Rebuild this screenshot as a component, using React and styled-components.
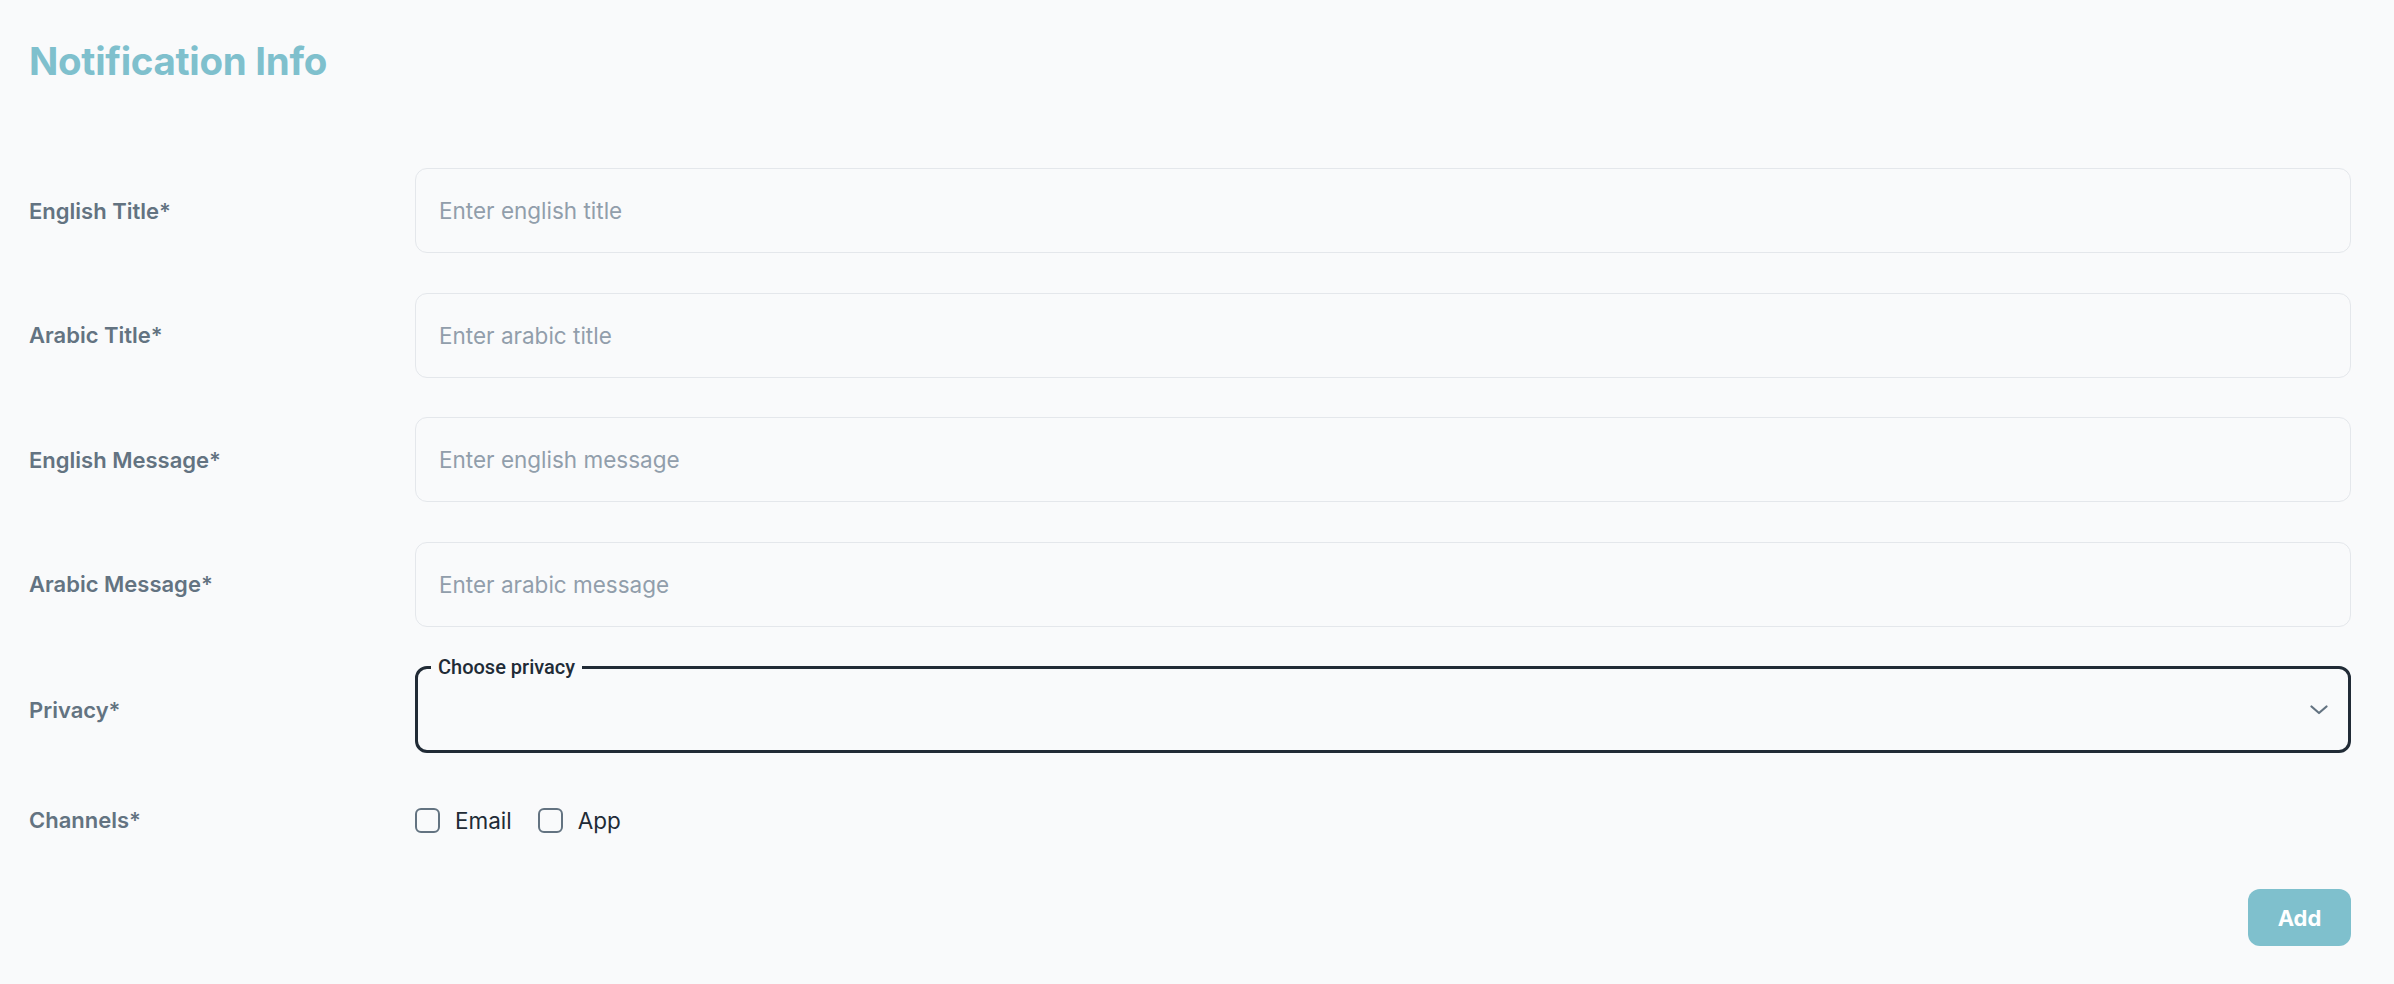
import React, { useState } from 'react'
import styled, { createGlobalStyle } from 'styled-components'

const GlobalStyle = createGlobalStyle`
  * { box-sizing: border-box; }
  body {
    margin: 0;
    background: #f9fafb;
    font-family: Inter, 'Noto Sans', sans-serif;
  }
`

const fields = [
  { label: 'English Title*', placeholder: 'Enter english title' },
  { label: 'Arabic Title*', placeholder: 'Enter arabic title' },
  { label: 'English Message*', placeholder: 'Enter english message' },
  { label: 'Arabic Message*', placeholder: 'Enter arabic message' },
]

export default function App() {
  const [channels, setChannels] = useState({ email: false, app: false })

  const toggle = (key) => {
    setChannels((prev) => ({ ...prev, [key]: !prev[key] }))
  }

  return (
    <Page>
      <GlobalStyle />
      <Title>Notification Info</Title>
      <Form onSubmit={(e) => e.preventDefault()}>
        {fields.map((f) => (
          <Row key={f.label}>
            <Label>{f.label}</Label>
            <Input type='text' placeholder={f.placeholder} />
          </Row>
        ))}
        <Row>
          <Label>Privacy*</Label>
          <SelectBox>
            <FloatLabel>Choose privacy</FloatLabel>
            <Chevron width='18' height='10' viewBox='0 0 18 10'>
              <polyline
                points='1.5,1.5 9,8 16.5,1.5'
                fill='none'
                stroke='#637381'
                strokeWidth='2.2'
                strokeLinecap='round'
                strokeLinejoin='round'
              />
            </Chevron>
          </SelectBox>
        </Row>
        <Row $compact>
          <Label>Channels*</Label>
          <Checks>
            <CheckItem onClick={() => toggle('email')}>
              <Box $checked={channels.email} />
              <span>Email</span>
            </CheckItem>
            <CheckItem onClick={() => toggle('app')}>
              <Box $checked={channels.app} />
              <span>App</span>
            </CheckItem>
          </Checks>
        </Row>
        <Actions>
          <AddButton type='submit'>Add</AddButton>
        </Actions>
      </Form>
    </Page>
  )
}

const Page = styled.div`
  padding: 37px 43px 22px 29px;
`

const Title = styled.h1`
  margin: 0;
  font-size: 38.5px;
  line-height: 48px;
  font-weight: 700;
  color: #7fc0cd;
  letter-spacing: -0.3px;
`

const Form = styled.form`
  margin-top: 83px;
  display: flex;
  flex-direction: column;
  gap: 39.5px;
`

const Row = styled.div`
  display: grid;
  grid-template-columns: 386px 1fr;
  align-items: center;
  margin-top: ${(p) => (p.$compact ? '14px' : '0')};
`

const Label = styled.label`
  font-size: 22px;
  font-weight: 600;
  color: #637381;
`

const Input = styled.input`
  width: 100%;
  height: 85px;
  padding: 0 23px;
  background: #f9fafb;
  border: 1.5px solid #e4e7eb;
  border-radius: 12px;
  font-family: inherit;
  font-size: 22.5px;
  color: #212b36;
  outline: none;
  &::placeholder {
    color: #919eab;
  }
`

const SelectBox = styled.div`
  position: relative;
  height: 87px;
  border: 3px solid #212b36;
  border-radius: 12px;
  display: flex;
  align-items: center;
  justify-content: flex-end;
  padding-right: 20px;
`

const FloatLabel = styled.span`
  position: absolute;
  top: -14px;
  left: 13px;
  padding: 0 7px;
  background: #f9fafb;
  font-family: Roboto, 'Noto Sans', sans-serif;
  font-size: 20px;
  font-weight: 500;
  line-height: 24px;
  color: #212b36;
`

const Chevron = styled.svg`
  display: block;
`

const Checks = styled.div`
  display: flex;
  align-items: center;
  gap: 26px;
`

const CheckItem = styled.label`
  display: flex;
  align-items: center;
  gap: 15px;
  font-size: 22.5px;
  color: #212b36;
  cursor: pointer;
`

const Box = styled.span`
  width: 25px;
  height: 25px;
  border: 2px solid #637381;
  border-radius: 6px;
  background: ${(p) => (p.$checked ? '#7fc0cd' : 'transparent')};
`

const Actions = styled.div`
  display: flex;
  justify-content: flex-end;
  margin-top: 16px;
`

const AddButton = styled.button`
  width: 103px;
  height: 57px;
  border: none;
  border-radius: 12px;
  background: #7fc0cd;
  color: #fff;
  font-family: inherit;
  font-size: 22px;
  font-weight: 700;
  cursor: pointer;
`
